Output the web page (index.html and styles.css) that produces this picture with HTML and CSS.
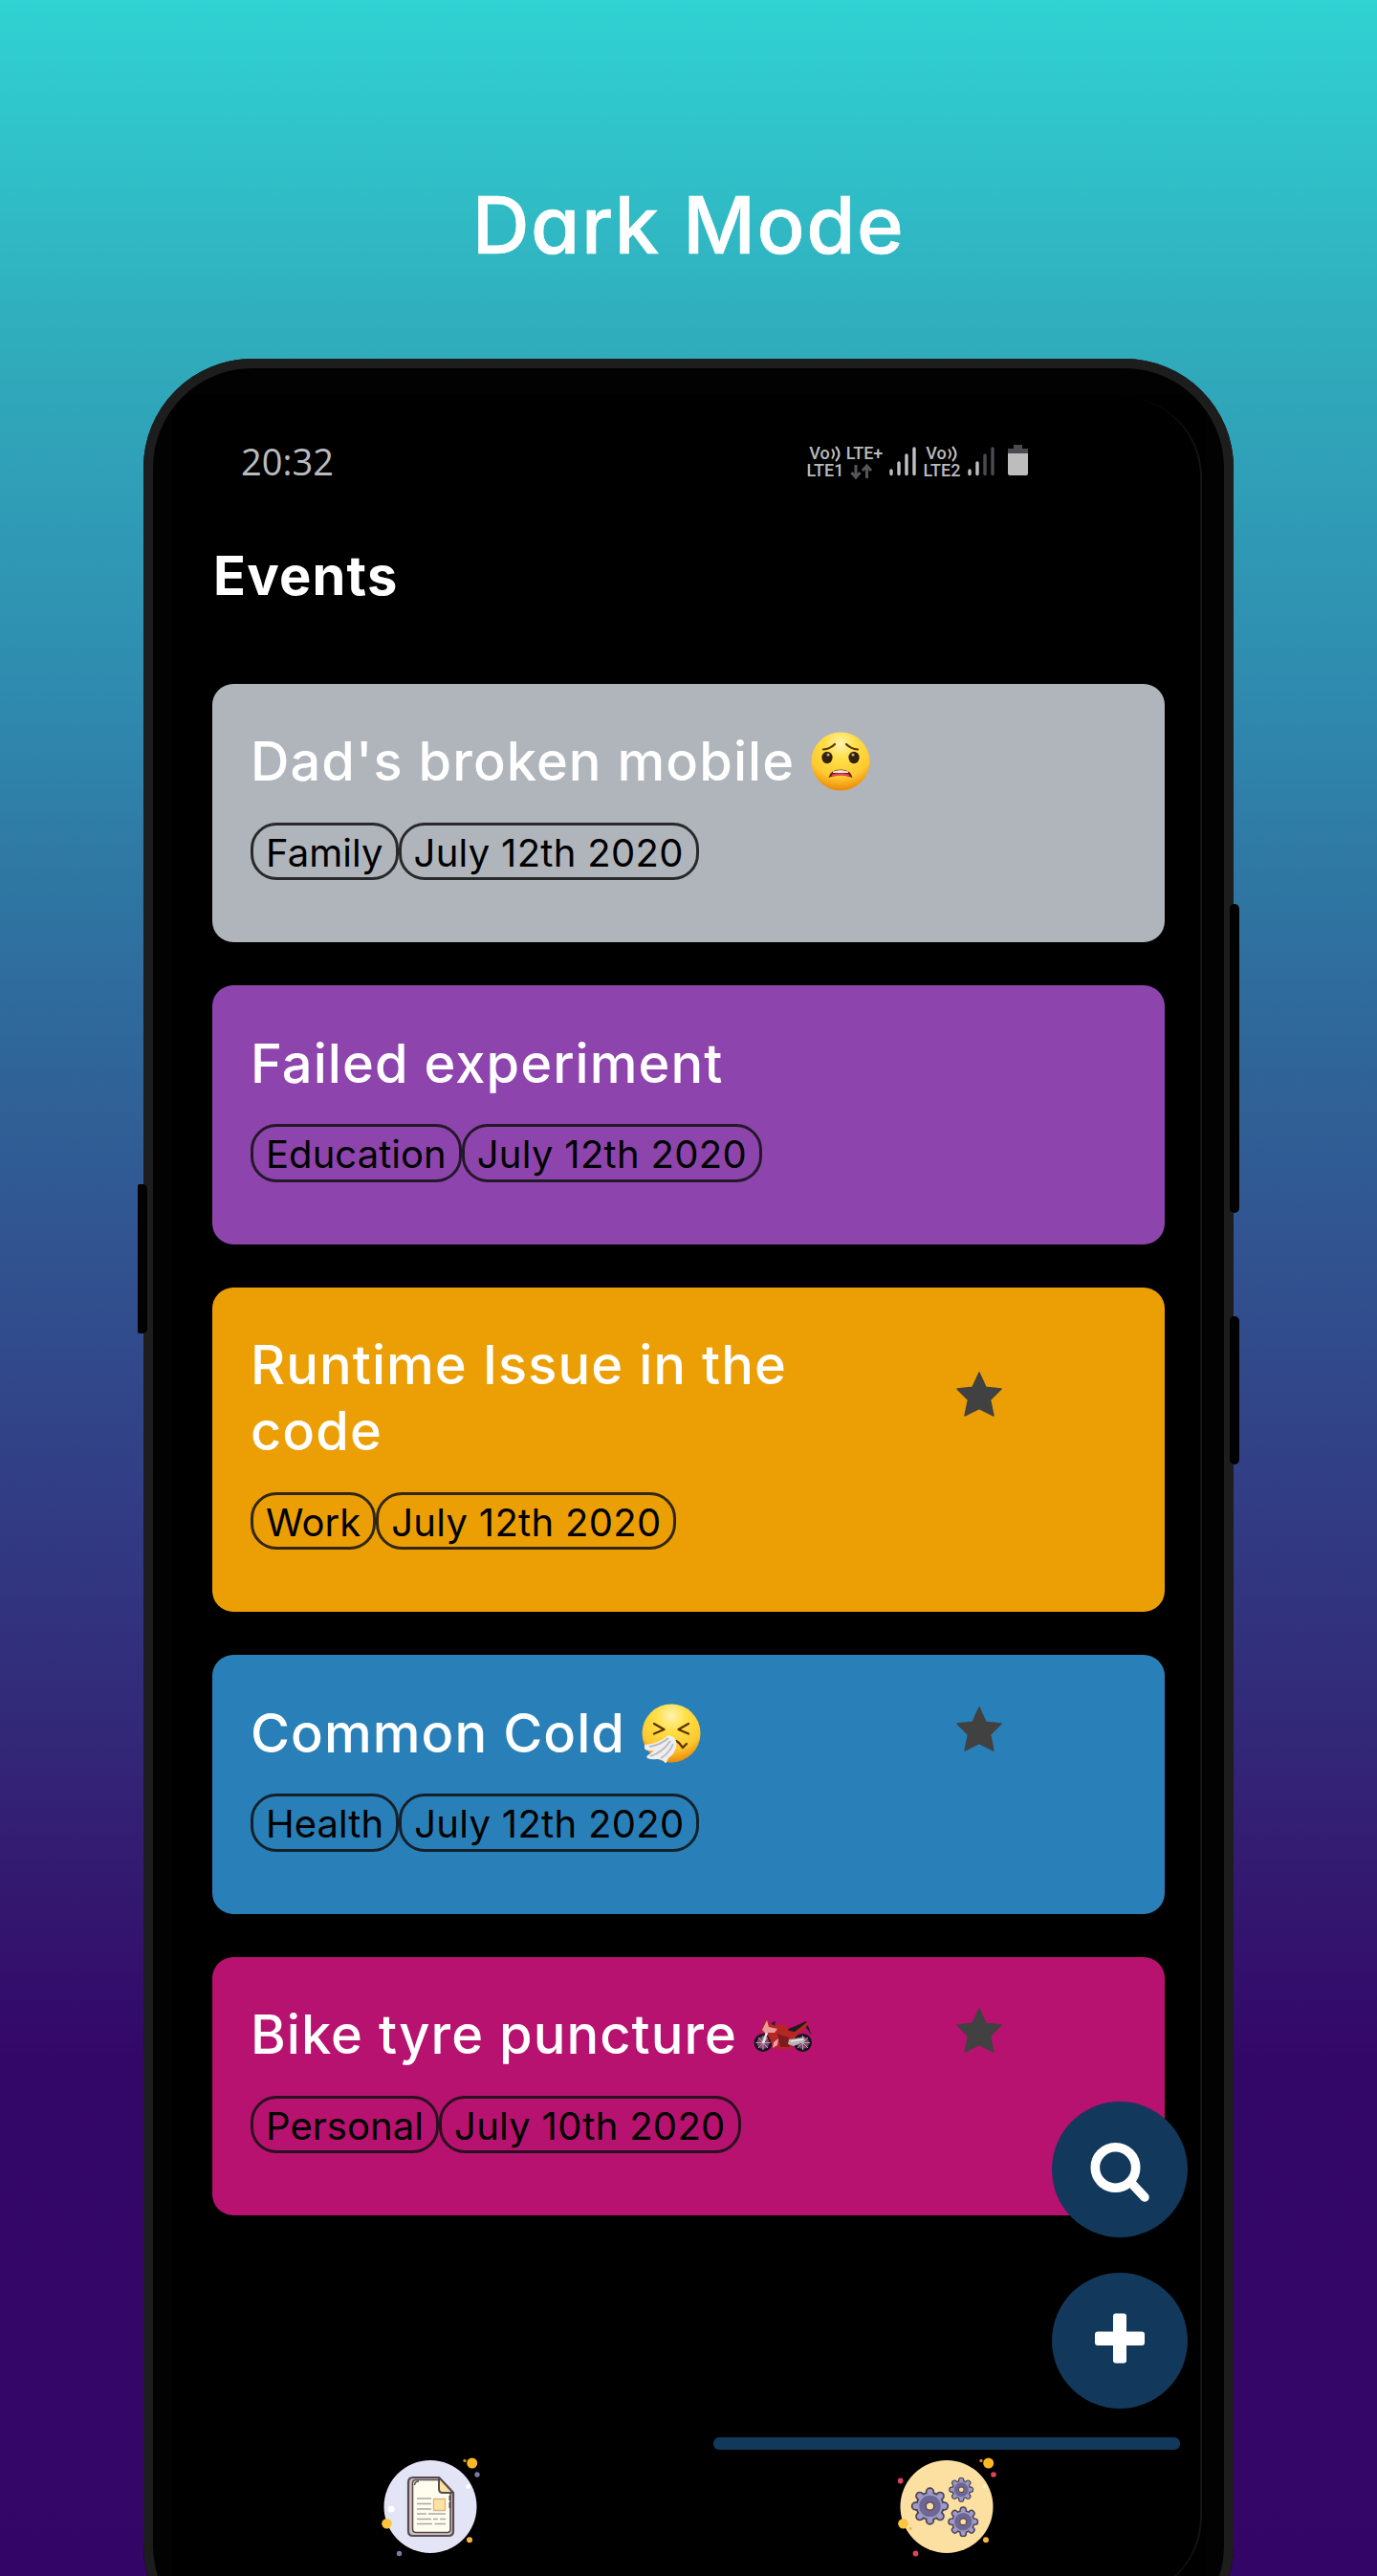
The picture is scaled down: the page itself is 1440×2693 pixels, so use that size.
FILE: index.html
```html
<!DOCTYPE html>
<html lang="en">
<head>
<meta charset="utf-8">
<title>Dark Mode</title>
<link rel="stylesheet" href="styles.css">
</head>
<body>
<svg class="defs" aria-hidden="true">
  <defs>
    <radialGradient id="skin" cx=".5" cy=".2" r=".85">
      <stop offset="0" stop-color="#fff3b0"/><stop offset=".3" stop-color="#ffdf48"/><stop offset=".68" stop-color="#fdc92f"/><stop offset="1" stop-color="#e87a00"/>
    </radialGradient>
    <symbol id="star" viewBox="0 0 48 47">
      <path d="M24 1 L31 16.300 L47 18 L35.500 29.500 L39 46 L24 38.500 L9 46 L12.500 29.500 L1 18 L17 16.300 Z" fill="#414141" stroke="#414141" stroke-width="1.500" stroke-linejoin="round"/>
    </symbol>
    <symbol id="gear" viewBox="-20 -20 40 40">
      <g stroke="#4b4252" stroke-linecap="round" stroke-width="9.500">
        <path d="M0-15V15M-15 0H15M-10.600-10.600L10.600 10.600M-10.600 10.600L10.600-10.600"/>
      </g>
      <circle r="15" fill="#4b4252"/>
      <path d="M0-15V15M-15 0H15M-10.600-10.600L10.600 10.600M-10.600 10.600L10.600-10.600" stroke="#9c9ac6" stroke-linecap="round" stroke-width="6"/>
      <circle r="13.200" fill="#9c9ac6"/>
      <circle r="8" fill="none" stroke="#6e6796" stroke-width="6.500"/>
      <circle r="4.300" fill="#fce0a2" stroke="#5b4a55" stroke-width="1.600"/>
    </symbol>
  </defs>
</svg>
<h1 class="headline">Dark Mode</h1>
<main class="phone">
  <span class="key key-left"></span>
  <span class="key key-power"></span>
  <span class="key key-volume"></span>
  <div class="screen">
    <span class="glass"></span>
    <header class="status">
      <time class="clock">20:32</time>
      <div class="signals">
        <div class="sim sim1"><span class="vo">Vo<svg width="11" height="17" viewBox="0 0 11 17"><path d="M1 3.500Q5 8.500 1 13.500M5 1Q12 8.500 5 16" fill="none" stroke="#bfc0c4" stroke-width="2"/></svg></span><span>LTE1</span></div>
        <div class="sim net"><span>LTE+</span><svg width="24" height="16" viewBox="0 0 24 16"><path d="M6 1V14M1.500 9L6 14L10.500 9M17.500 15V2M13 7L17.500 2L22 7" fill="none" stroke="#55565a" stroke-width="3"/></svg></div>
        <svg class="bars" width="28" height="32" viewBox="0 0 28 32" stroke="#bfc0c4" stroke-width="3.400" stroke-linecap="round"><path d="M2 26V29.500M10 18V29.500M18 10V29.500M26 3V29.500"/></svg>
        <div class="sim sim2"><span class="vo">Vo<svg width="11" height="17" viewBox="0 0 11 17"><path d="M1 3.500Q5 8.500 1 13.500M5 1Q12 8.500 5 16" fill="none" stroke="#bfc0c4" stroke-width="2"/></svg></span><span>LTE2</span></div>
        <svg class="bars" width="28" height="32" viewBox="0 0 28 32" stroke="#bfc0c4" stroke-width="3.400" stroke-linecap="round"><path d="M2 26V29.500M10 18V29.500"/><path d="M18 10V29.500M26 3V29.500" stroke="#4b4b4f"/></svg>
        <svg class="battery" width="21" height="32" viewBox="0 0 21 32"><path d="M6 0H15V4H21V10H0V4H6Z" fill="#4b4b4f"/><path d="M0 9H21V30Q21 32 19 32H2Q0 32 0 30Z" fill="#bdbdbd"/></svg>
      </div>
    </header>
    <h2 class="heading">Events</h2>
    <section class="events">
      <article class="card grey">
        <div class="top"><h3>Dad's broken mobile <svg class="emoji" viewBox="0 0 62 62"><circle cx="31" cy="31" r="30.500" fill="url(#skin)"/><path d="M13 18.500Q20 18 25 13M49 18.500Q42 18 37 13" fill="none" stroke="#5b3208" stroke-width="2.200" stroke-linecap="round"/><ellipse cx="17" cy="27" rx="5.600" ry="6.200" fill="#35200c"/><ellipse cx="45" cy="27" rx="5.600" ry="6.200" fill="#35200c"/><circle cx="18" cy="24" r="1.500" fill="#c7a874"/><circle cx="44" cy="24" r="1.500" fill="#c7a874"/><path d="M18.500 48Q20 39.500 31 39.500Q42 39.500 43.500 48Q37 45 31 45Q25 45 18.500 48Z" fill="#6b1d14"/><path d="M23 41.500Q31 38.500 39 41.500V43H23Z" fill="#eee4d6"/><path d="M22 46Q31 43 40 46" fill="none" stroke="#e0455c" stroke-width="2.500"/></svg></h3></div>
        <div class="tags"><span>Family</span><span class="date">July 12th 2020</span></div>
      </article>
      <article class="card purple">
        <div class="top"><h3>Failed experiment</h3></div>
        <div class="tags"><span>Education</span><span class="date">July 12th 2020</span></div>
      </article>
      <article class="card orange">
        <div class="top"><h3>Runtime Issue in the code</h3><svg class="star"><use href="#star"/></svg></div>
        <div class="tags"><span>Work</span><span class="date">July 12th 2020</span></div>
      </article>
      <article class="card blue">
        <div class="top"><h3>Common Cold <svg class="emoji" viewBox="0 0 62 62"><circle cx="31" cy="31" r="30.500" fill="url(#skin)"/><path d="M13 21L23.500 27L13 31.500M49 21L38.500 27L49 31.500M36 39L39 41L43 46L47 42" fill="none" stroke="#5b3208" stroke-width="2.300" stroke-linecap="round" stroke-linejoin="round"/><path d="M3 43Q18 42 28 33Q35 34 36.500 41Q36 52 28 57L25 63Q23 58 16 58Q10 59 6 57Q4 55 8 53L13 49Q5 50 3 47Z" fill="#eeeef0"/><path d="M8 45Q20 43 28 36M9 55Q22 51 30 39M20 57Q29 52 33 42" fill="none" stroke="#b8b9c0" stroke-width="1.800"/></svg></h3><svg class="star"><use href="#star"/></svg></div>
        <div class="tags"><span>Health</span><span class="date">July 12th 2020</span></div>
      </article>
      <article class="card pink">
        <div class="top"><h3>Bike tyre puncture <svg class="emoji" viewBox="0 0 62 62"><g fill="#64616d" fill-opacity=".6" stroke="#17151c" stroke-width="3"><circle cx="10" cy="39.500" r="8"/><circle cx="51.500" cy="39.500" r="8"/></g><path d="M10 32V47M2.500 39.500H17.500M5 34L15 45M15 34L5 45M51.500 32V47M44 39.500H59M46 34L57 45M57 34L46 45" stroke="#aaa5af" stroke-width="1"/><path d="M34 26L44 22L55 17L61 32L53 21L43 30Z" fill="#1d1b20"/><path d="M7 28L12 17L15 14L17 20L25 21L33 20L37 27L43 28L56 18L58 20L46 31L40 39L39 46H21L17 36L14 30Z" fill="#b52625"/><path d="M9 26L14 16L16 23L25 25L22 29L12 29Z" fill="#ed9a9f"/><path d="M21 39L26 35L25 42L20 45Z" fill="#ef9bb0"/><path d="M14 29L10 40" stroke="#e8e2df" stroke-width="2.500"/><path d="M18 19L23 17L22 22Z" fill="#29202a"/><path d="M25 30L37 34L38 44H28Z" fill="#7e1b20"/><path d="M37 36L53 34L54 38L42 43L36 41Z" fill="#b6b4b5"/><path d="M39 38L52 36" stroke="#e9e9e9" stroke-width="1.500"/></svg></h3><svg class="star"><use href="#star"/></svg></div>
        <div class="tags"><span>Personal</span><span class="date">July 10th 2020</span></div>
      </article>
    </section>
    <nav class="tabs">
      <a class="tab"><svg width="120" height="110" viewBox="0 0 120 110">
        <circle cx="60" cy="55.500" r="48.500" fill="#e3e4f6"/>
        <circle cx="103.700" cy="10" r="5.500" fill="#fcb825"/><circle cx="96" cy="7.500" r="1.700" fill="#cf8d1c"/><circle cx="109" cy="22" r="2.700" fill="#7c7ba5"/><circle cx="99.500" cy="34.500" r="2.400" fill="#fff"/><circle cx="19" cy="58" r="3.600" fill="#fff"/><circle cx="14.500" cy="73.300" r="5.300" fill="#fcc53e"/><circle cx="27.500" cy="104.500" r="2.700" fill="#7c7ba5"/><circle cx="101" cy="90.300" r="3" fill="#fbb541"/>
        <path d="M42 25H69L84 41V81Q84 86 79 86H42Q37 86 37 81V30Q37 25 42 25Z" fill="#cfc5c2" stroke="#574b50" stroke-width="2.200"/>
        <path d="M45 27.500H68L81 41V79Q81 82.500 78 82.500H45Q41.500 82.500 41.500 79V31Q41.500 27.500 45 27.500Z" fill="#fffdee" stroke="#574b50" stroke-width="1.600"/>
        <path d="M69 25V37Q69 41 73 41H84Z" fill="#fbe2a3" stroke="#574b50" stroke-width="2" stroke-linejoin="round"/>
        <path d="M43.500 33Q43.500 29 48 29" fill="none" stroke="#574b50" stroke-width="1.500"/>
        <path d="M46 47H61M46 52.500H61M46 58H61M46 63H56M58 63H76M46 68.500H61M63 68.500H68M70 68.500H76M46 73.500H62M64.500 73.500H76" stroke="#aaa5a6" stroke-width="1.600"/>
        <path d="M63.500 47.500H75.500V59.500H63.500Z" fill="#fce3a5" stroke="#d9b584" stroke-width="1.300"/>
        <path d="M80.500 44V49M80.500 51V57" stroke="#574b50" stroke-width="2"/>
      </svg></a>
      <a class="tab active"><svg width="120" height="110" viewBox="0 0 120 110">
        <circle cx="60" cy="55.500" r="48.500" fill="#fce0a2"/>
        <circle cx="103.700" cy="10" r="5.500" fill="#fcb825"/><circle cx="96" cy="7.500" r="1.700" fill="#cf8d1c"/><circle cx="109" cy="22" r="2.800" fill="#d9445c"/><circle cx="99.500" cy="34.500" r="2" fill="#fff2bd"/><circle cx="11.700" cy="28.500" r="2.900" fill="#d9445c"/><circle cx="14.500" cy="73.300" r="5.300" fill="#fcc53e"/><circle cx="22" cy="78.500" r="1.800" fill="#f3bd49"/><circle cx="27.500" cy="104.500" r="2.900" fill="#d9445c"/><circle cx="101" cy="90.300" r="3" fill="#fbb541"/>
        <use href="#gear" x="22.500" y="35" width="40" height="40"/>
        <use href="#gear" x="62" y="24.500" width="26.500" height="26.500"/>
        <use href="#gear" x="61" y="55" width="32.500" height="32.500"/>
      </svg></a>
    </nav>
    <div class="actions">
      <button class="fab" aria-label="Search"><svg width="142" height="142" viewBox="0 0 142 142"><circle cx="66.500" cy="69" r="21.200" fill="none" stroke="#fff" stroke-width="9.600"/><path d="M82 84L97 100" stroke="#fff" stroke-width="9.500" stroke-linecap="round"/></svg></button>
      <button class="fab" aria-label="Add"><svg width="142" height="142" viewBox="0 0 142 142" fill="#fff"><rect x="64" y="42.500" width="14" height="52" rx="3"/><rect x="45" y="61.500" width="52" height="14.500" rx="3"/></svg></button>
    </div>
  </div>
</main>
</body>
</html>
```
FILE: styles.css
```css
* { box-sizing: border-box; }
body {
  margin: 0;
  height: 2693px;
  overflow: hidden;
  background: linear-gradient(180deg, #30d2d2 0, #30a9bb 390px, #2f8db0 700px, #2f6b9c 1040px, #31508e 1340px, #322e7c 1740px, #331a70 1960px, #330768 2150px, #330566 2693px);
  font-family: Inter, "Liberation Sans", sans-serif;
}
.defs { position: absolute; width: 0; height: 0; }
.headline {
  margin: 0;
  padding-top: 185px;
  height: 375px;
  font-size: 83px;
  line-height: 100px;
  font-weight: 500;
  letter-spacing: 1.500px;
  font-feature-settings: "cv11";
  -webkit-text-stroke: .6px #fff;
  text-align: center;
  color: #fff;
}
.phone {
  position: relative;
  width: 1140px;
  height: 2400px;
  margin-left: 150px;
  border-radius: 114px;
  background: #020202;
  padding: 38px 30px 0;
}
/* metal rim, drawn over the square corners of the screen */
.phone::after {
  content: "";
  position: absolute;
  inset: 0;
  border: 10px solid #1d1d1d;
  border-radius: 114px;
  pointer-events: none;
}
.key { position: absolute; z-index: 1; background: #020202; width: 10px; border-radius: 5px; }
.key-left { left: -6px; top: 863px; height: 156px; border-radius: 2px 5px 5px 2px; }
.key-power { right: -6px; top: 570px; height: 323px; }
.key-volume { right: -6px; top: 1001px; height: 155px; }
.screen { position: relative; width: 1080px; height: 2290px; background: #000; }
.glass {
  position: absolute;
  left: 6px;
  top: 2px;
  width: 1071px;
  height: 2300px;
  border-right: 2px solid #141414;
  border-radius: 84px;
}
.status { display: flex; height: 100px; padding: 43px 185px 0 72px; justify-content: space-between; color: #b9bbbe; }
.clock { font: 500 38px/52px "Open Sans", sans-serif; letter-spacing: 0; }
.signals { display: flex; align-items: flex-start; padding-top: 9px; }
.sim { display: flex; flex-direction: column; align-items: center; font: 500 18px/18px Roboto, sans-serif; }
.vo { display: flex; gap: 1px; align-items: center; }
.vo svg { margin-top: 1px; }
.sim1 { width: 38px; }
.net { width: 38px; margin-left: 3px; }
.net svg { margin: 2px 6px 0 0; }
.sim2 { width: 40px; margin-left: 7px; }
.bars { margin: 1px 0 0 7px; }
.battery { margin-left: 14px; }
.heading { margin: 55px 0 0 43px; font-size: 56px; line-height: 68px; font-weight: 700; letter-spacing: 1.200px; color: #fff; }
.events { display: flex; flex-direction: column; gap: 45px; margin: 78.500px 42px 0; }
.card { padding: 47.500px 40px 65px; border-radius: 22px; }
.grey { background: #b0b5bc; }
.purple { background: #8e44ad; }
.orange { background: #eb9f05; }
.blue { background: #2980b9; }
.pink { background: #b7126f; }
.top { display: flex; align-items: center; }
.card h3 { margin: 0; width: 692px; font-size: 56px; line-height: 69px; font-weight: 500; letter-spacing: 1.050px; color: #fff; }
.emoji { width: 62px; height: 62px; margin: -10px 0 0 1px; vertical-align: -11px; }
.star { width: 48px; height: 47px; margin: 0 0 10px 46px; }
.tags { display: flex; margin-top: 28.500px; }
.tags span {
  height: 60.500px;
  padding: 0 13px;
  border: 3px solid rgba(16, 16, 16, .85);
  border-radius: 27px;
  font-size: 40px;
  line-height: 58px;
  letter-spacing: .05px;
  color: #000;
}
.tags .date { letter-spacing: .3px; }
.tabs { display: flex; margin-top: 231.500px; }
.tab { position: relative; flex: 1; display: flex; justify-content: center; padding-top: 17px; }
.active::before { content: ""; position: absolute; left: 26px; right: 26px; top: 0; height: 13px; border-radius: 6px; background: #12385b; }
.actions { position: absolute; left: 920px; top: 1784px; display: flex; flex-direction: column; gap: 36.500px; }
.fab { width: 142px; height: 142px; padding: 0; border: 0; border-radius: 50%; background: #12385b; }
.fab svg { display: block; }
```
